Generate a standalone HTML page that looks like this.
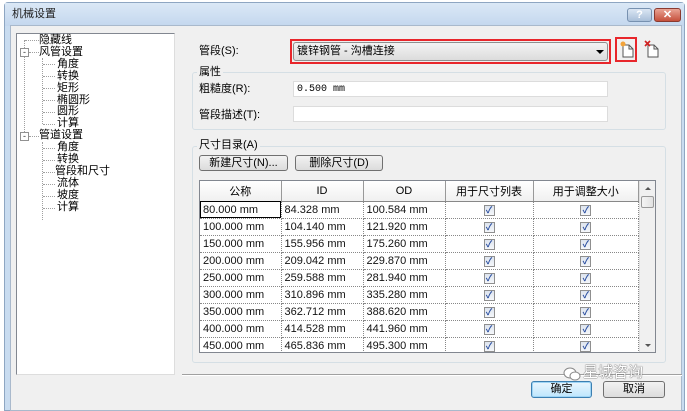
<!DOCTYPE html>
<html><head><meta charset="utf-8"><style>
*{margin:0;padding:0;box-sizing:border-box}
body{width:687px;height:411px;overflow:hidden;background:#fff;font-family:"Liberation Sans","Noto Sans CJK SC",sans-serif;font-size:11px;color:#000;position:relative}
.a{position:absolute}
.win{left:4px;top:2px;width:681px;height:409px;background:#c9dcf0;border:1px solid #8ea6c2;border-radius:4px 4px 0 0}
.title{left:5px;top:3px;width:679px;height:23px;background:linear-gradient(#dbe8f6,#c4d7ee)}
.body{left:10px;top:25px;width:672px;height:386px;background:#f0f0f0;border:1px solid #a9b9cc}
.tree{left:16px;top:33px;width:159px;height:342px;background:#fff;border:1px solid #828790;border-right-color:#ddd;border-bottom-color:#ddd}
.t{position:absolute;font-size:11px;line-height:11px;white-space:nowrap}
.dot{position:absolute;border-top:1px dotted #a0a0a0;height:0}
.vdot{position:absolute;border-left:1px dotted #a0a0a0;width:0}
.pm{position:absolute;width:9px;height:9px;border:1px solid #919191;background:#fff;font-size:9px;line-height:6px;text-align:center;color:#333}
.grp{border:1px solid #d5dfe5;border-radius:3px}
.inp{background:#fff;border:1px solid #dcdcdc;height:16px}
.btn{border:1px solid #707070;border-radius:3px;background:linear-gradient(#f2f2f2,#dcdcdc);text-align:center;font-size:11px;line-height:15px}
table{border-collapse:collapse;font-size:11px}
td{border-right:1px dotted #888;border-bottom:1px dotted #888;height:17px;padding-left:3px;white-space:nowrap;color:#111}
th{font-weight:normal;height:20px;border-right:1px solid #999;border-bottom:1px solid #888;background:linear-gradient(#fff,#f0f0f0);text-align:center}
.cb{display:inline-block;width:11px;height:11px;border:1px solid #8f8f8f;background:linear-gradient(#dde4ee,#f5f7fa);color:#2b4fa0;font-size:9px;line-height:9px;text-align:center;font-weight:bold}
td.c{text-align:center;padding:0}
</style></head><body>
<div class="a win"></div>
<div class="a title"></div>
<div class="a t" style="left:12px;top:9px;font-size:11px;color:#222">机械设置</div>
<div class="a" style="left:627px;top:8px;width:25px;height:14px;border:1px solid #7791b0;border-radius:3px;background:linear-gradient(#dbe6f3,#a9bfd9);color:#fff;text-align:center;font-size:11px;line-height:12px;font-weight:bold">?</div>
<div class="a" style="left:654px;top:8px;width:27px;height:14px;border:1px solid #8a3a30;border-radius:3px;background:linear-gradient(#e9a394,#c5503c);color:#fff;text-align:center;font-size:11px;line-height:12px;font-weight:bold">✕</div>
<div class="a body"></div>
<div class="a tree">
<div class="vdot" style="left:7px;top:6px;height:96px"></div>
<div class="vdot" style="left:25px;top:24px;height:66px"></div>
<div class="vdot" style="left:25px;top:108px;height:78px"></div>
<div class="dot" style="left:8px;top:6px;width:14px"></div><div class="t" style="left:22px;top:1px">隐藏线</div>
<div class="pm" style="left:3px;top:14px">-</div><div class="dot" style="left:12px;top:18px;width:10px"></div><div class="t" style="left:22px;top:13px">风管设置</div>
<div class="dot" style="left:26px;top:30px;width:12px"></div><div class="t" style="left:40px;top:25px">角度</div>
<div class="dot" style="left:26px;top:42px;width:12px"></div><div class="t" style="left:40px;top:37px">转换</div>
<div class="dot" style="left:26px;top:54px;width:12px"></div><div class="t" style="left:40px;top:49px">矩形</div>
<div class="dot" style="left:26px;top:66px;width:12px"></div><div class="t" style="left:40px;top:61px">椭圆形</div>
<div class="dot" style="left:26px;top:78px;width:12px"></div><div class="t" style="left:40px;top:72px">圆形</div>
<div class="dot" style="left:26px;top:90px;width:12px"></div><div class="t" style="left:40px;top:84px">计算</div>
<div class="pm" style="left:3px;top:98px">-</div><div class="dot" style="left:12px;top:102px;width:10px"></div><div class="t" style="left:22px;top:96px">管道设置</div>
<div class="dot" style="left:26px;top:114px;width:12px"></div><div class="t" style="left:40px;top:108px">角度</div>
<div class="dot" style="left:26px;top:126px;width:12px"></div><div class="t" style="left:40px;top:120px">转换</div>
<div class="dot" style="left:26px;top:138px;width:12px"></div><div class="t" style="left:38px;top:132px">管段和尺寸</div>
<div class="dot" style="left:26px;top:150px;width:12px"></div><div class="t" style="left:40px;top:144px">流体</div>
<div class="dot" style="left:26px;top:162px;width:12px"></div><div class="t" style="left:40px;top:156px">坡度</div>
<div class="dot" style="left:26px;top:174px;width:12px"></div><div class="t" style="left:40px;top:168px">计算</div>
</div>

<div class="a t" style="left:199px;top:46px">管段(S):</div>
<div class="a" style="left:290px;top:39px;width:321px;height:25px;border:2px solid #e8262b"></div>
<div class="a" style="left:293px;top:42px;width:315px;height:19px;border:1px solid #8e8f8f;border-radius:3px;background:linear-gradient(#f3f3f3,#dcdcdc)"></div>
<div class="a t" style="left:297px;top:46px">镀锌钢管 - 沟槽连接</div>
<div class="a" style="left:596px;top:50px;width:0;height:0;border-left:4px solid transparent;border-right:4px solid transparent;border-top:4px solid #000"></div>
<div class="a" style="left:615px;top:37px;width:22px;height:25px;border:2px solid #e8262b"></div>
<svg class="a" style="left:619px;top:40px" width="16" height="18"><path d="M4 5h6l4 4v8H4z" fill="#fff" stroke="#555"/><path d="M10 5v4h4" fill="none" stroke="#555"/><circle cx="4" cy="4" r="2.5" fill="#f2a33a"/></svg>
<svg class="a" style="left:644px;top:40px" width="16" height="18"><path d="M4 5h6l4 4v8H4z" fill="#fff" stroke="#555"/><path d="M10 5v4h4" fill="none" stroke="#555"/><path d="M1 1l5 5M6 1L1 6" stroke="#d02020" stroke-width="1.6"/></svg>

<div class="a grp" style="left:192px;top:72px;width:474px;height:58px"></div>
<div class="a t" style="left:197px;top:67px;background:#f0f0f0;padding:0 2px">属性</div>
<div class="a t" style="left:199px;top:84px">粗糙度(R):</div>
<div class="a inp" style="left:293px;top:81px;width:315px"></div>
<div class="a t" style="left:297px;top:84px;font-family:'Liberation Mono',monospace;font-size:10px">0.500 mm</div>
<div class="a t" style="left:199px;top:110px">管段描述(T):</div>
<div class="a inp" style="left:293px;top:106px;width:315px"></div>

<div class="a grp" style="left:192px;top:146px;width:474px;height:217px"></div>
<div class="a t" style="left:197px;top:140px;background:#f0f0f0;padding:0 2px">尺寸目录(A)</div>
<div class="a btn" style="left:199px;top:155px;width:89px;height:16px">新建尺寸(N)...</div>
<div class="a btn" style="left:295px;top:155px;width:88px;height:16px">删除尺寸(D)</div>

<div class="a" style="left:199px;top:180px;width:457px;height:173px;border:1px solid #828790;background:#fff;overflow:hidden">
<table style="width:439px">
<tr><th style="width:81px">公称</th><th style="width:82px">ID</th><th style="width:82px">OD</th><th style="width:88px">用于尺寸列表</th><th>用于调整大小</th></tr>
<tr><td style="outline:1px solid #000;outline-offset:-1px">80.000 mm</td><td>84.328 mm</td><td>100.584 mm</td><td class="c"><span class="cb">✓</span></td><td class="c"><span class="cb">✓</span></td></tr>
<tr><td>100.000 mm</td><td>104.140 mm</td><td>121.920 mm</td><td class="c"><span class="cb">✓</span></td><td class="c"><span class="cb">✓</span></td></tr>
<tr><td>150.000 mm</td><td>155.956 mm</td><td>175.260 mm</td><td class="c"><span class="cb">✓</span></td><td class="c"><span class="cb">✓</span></td></tr>
<tr><td>200.000 mm</td><td>209.042 mm</td><td>229.870 mm</td><td class="c"><span class="cb">✓</span></td><td class="c"><span class="cb">✓</span></td></tr>
<tr><td>250.000 mm</td><td>259.588 mm</td><td>281.940 mm</td><td class="c"><span class="cb">✓</span></td><td class="c"><span class="cb">✓</span></td></tr>
<tr><td>300.000 mm</td><td>310.896 mm</td><td>335.280 mm</td><td class="c"><span class="cb">✓</span></td><td class="c"><span class="cb">✓</span></td></tr>
<tr><td>350.000 mm</td><td>362.712 mm</td><td>388.620 mm</td><td class="c"><span class="cb">✓</span></td><td class="c"><span class="cb">✓</span></td></tr>
<tr><td>400.000 mm</td><td>414.528 mm</td><td>441.960 mm</td><td class="c"><span class="cb">✓</span></td><td class="c"><span class="cb">✓</span></td></tr>
<tr><td>450.000 mm</td><td>465.836 mm</td><td>495.300 mm</td><td class="c"><span class="cb">✓</span></td><td class="c"><span class="cb">✓</span></td></tr>
</table>
<div class="a" style="left:439px;top:0;width:17px;height:172px;background:#f0f0f0;border-left:1px solid #e0e0e0"></div>
<div class="a" style="left:445px;top:6px;border-left:3px solid transparent;border-right:3px solid transparent;border-bottom:3px solid #555"></div>
<div class="a" style="left:441px;top:15px;width:13px;height:12px;border:1px solid #999;border-radius:2px;background:linear-gradient(90deg,#f4f4f4,#e2e2e2)"></div>
<div class="a" style="left:445px;top:163px;border-left:3px solid transparent;border-right:3px solid transparent;border-top:3px solid #555"></div>
</div>

<div class="a" style="left:182px;top:374px;width:500px;height:2px;border-top:1px solid #a0a0a0;border-bottom:1px solid #fff"></div>
<div class="a t" style="left:583px;top:365px;font-size:15px;line-height:16px;color:#fff;text-shadow:0 0 1px #555,0 0 1px #555">星城咨询</div>
<svg class="a" style="left:563px;top:367px" width="18" height="15"><ellipse cx="7" cy="6" rx="6" ry="5" fill="#fff" stroke="#888"/><ellipse cx="12" cy="9" rx="5" ry="4" fill="#fff" stroke="#888"/></svg>
<div class="a btn" style="left:531px;top:381px;width:61px;height:17px;border-color:#3c7fb1;background:linear-gradient(#eaf6fd,#bee6fd);box-shadow:0 0 0 1px #9fd5f5 inset">确定</div>
<div class="a btn" style="left:603px;top:381px;width:62px;height:17px">取消</div>
</body></html>
